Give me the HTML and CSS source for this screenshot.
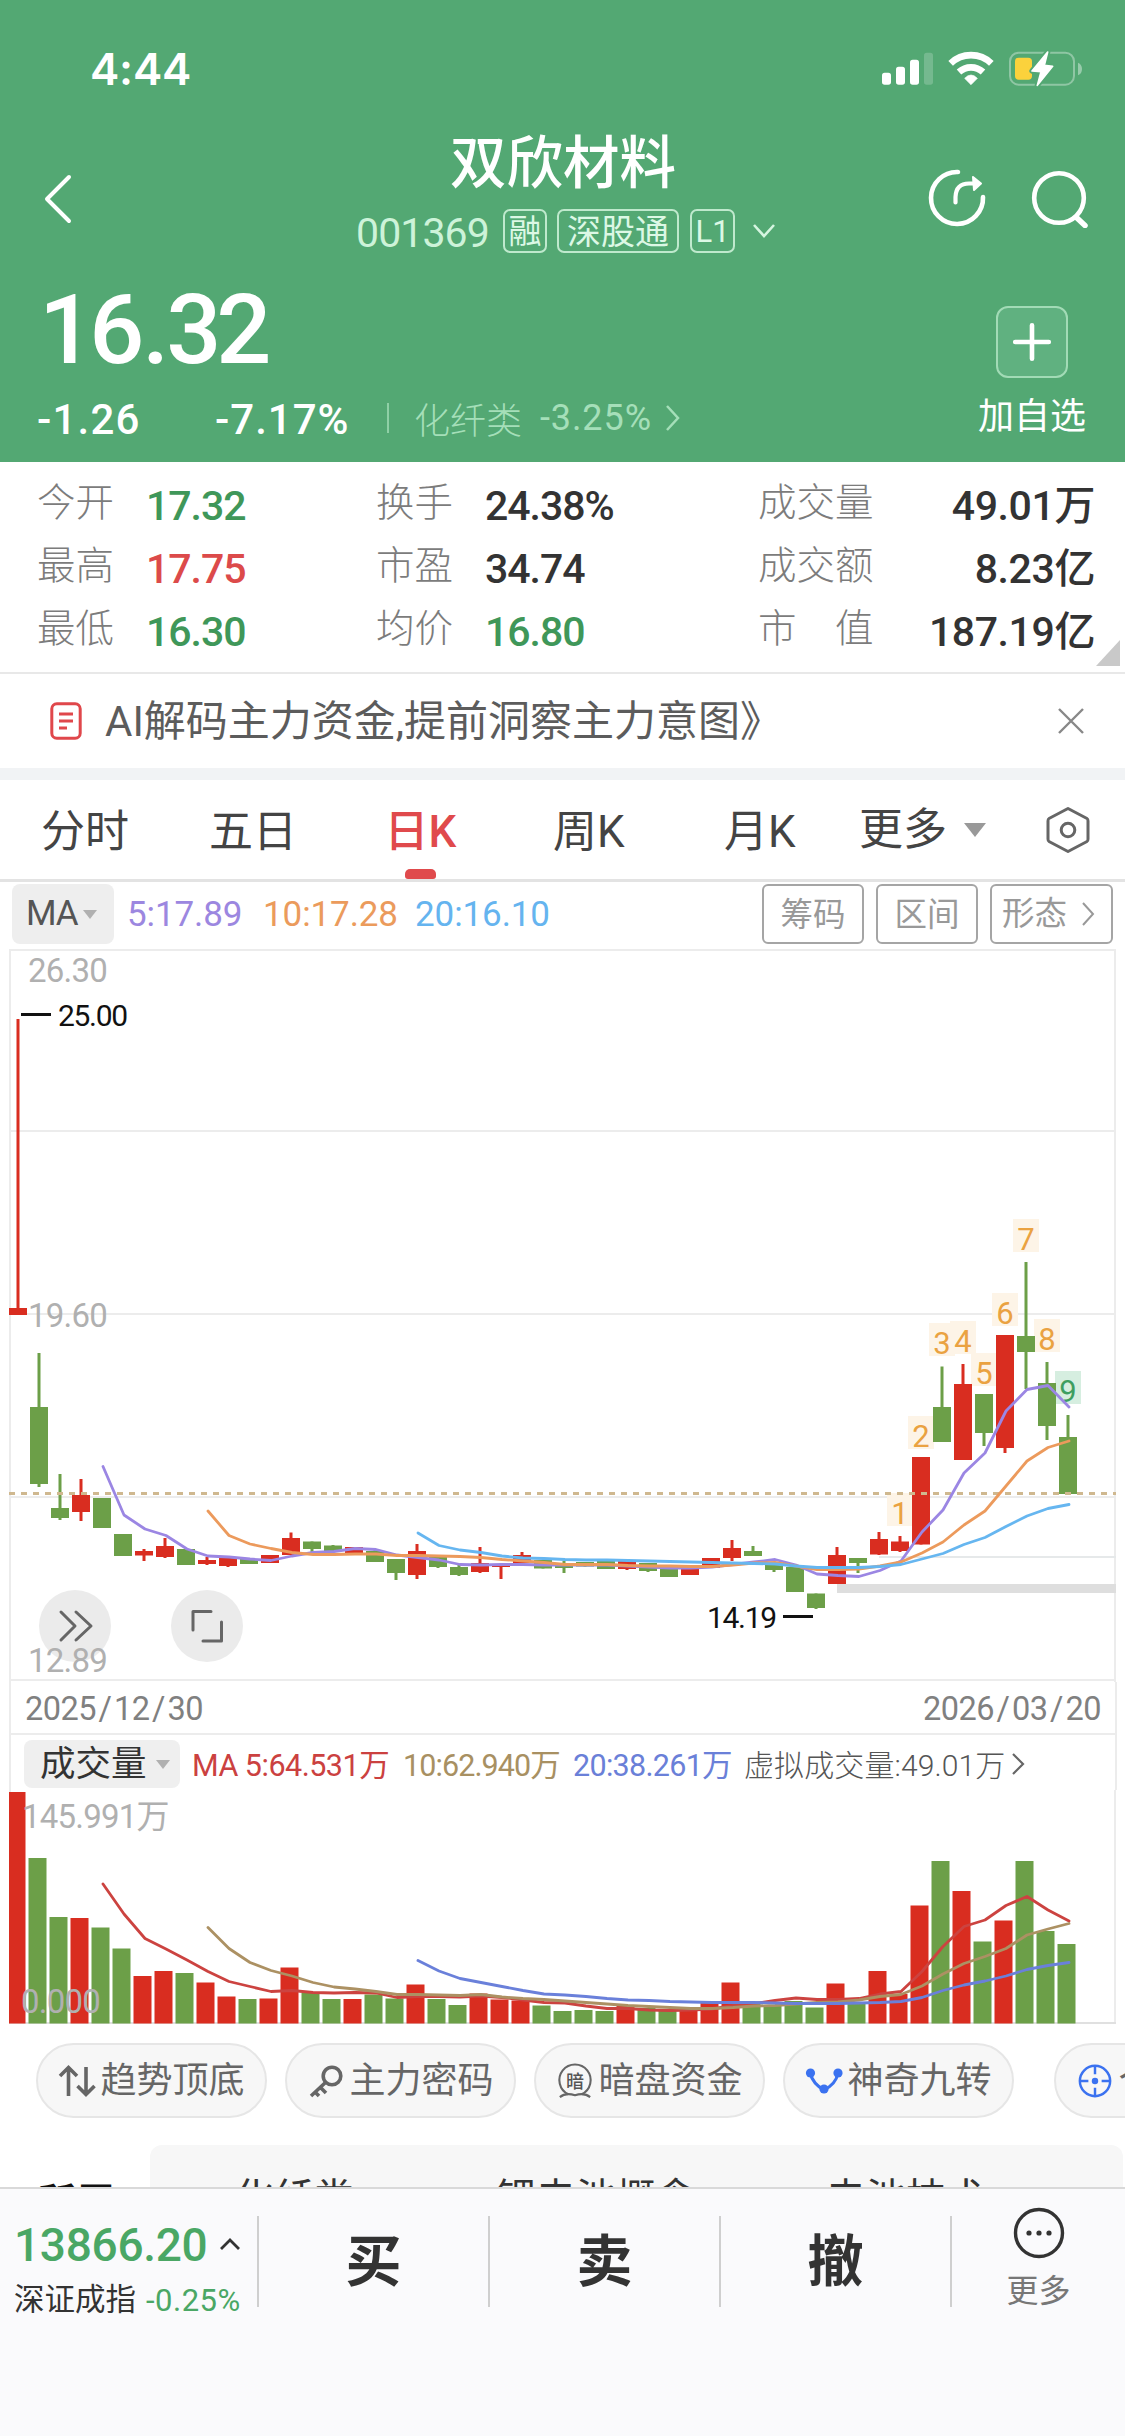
FILE: index.html
```html
<!DOCTYPE html>
<html lang="zh-CN">
<head>
<meta charset="utf-8">
<title>双欣材料 001369</title>
<link rel="stylesheet" href="styles.css">
</head>
<body>
<div class="app">
  <header class="hero">
    <div class="status">
      <span class="clock">4:44</span>
      <svg class="status-icons" viewBox="60 55 615 125">
        <g fill="#fff">
          <rect x="66" y="129" width="27" height="36" rx="8"/><rect x="108" y="111" width="27" height="54" rx="8"/><rect x="150" y="90" width="27" height="75" rx="8"/><rect x="192" y="69" width="27" height="96" rx="8" opacity=".2"/>
          <path d="M333 165l-19-19q19-20 38 0z" stroke="#fff" stroke-width="2" stroke-linejoin="round"/>
        </g>
        <g fill="none" stroke="#fff" stroke-width="20"><path d="M272 101A88 88 0 0 1 394 101"/><path d="M297 127A53 53 0 0 1 369 127"/></g>
        <rect x="450" y="69" width="192" height="96" rx="26" fill="none" stroke="#fff" stroke-opacity=".35" stroke-width="6"/>
        <path d="M654 99q12 5 12 19t-12 19z" fill="#fff" opacity=".4"/>
        <rect x="465" y="84" width="51" height="66" rx="11" fill="#fbd23c"/>
        <path d="M563 67L516 124L543 126L532 167L578 110L553 107Z" fill="#fff" stroke="#53a873" stroke-width="16" stroke-linejoin="round"/>
        <path d="M563 67L516 124L543 126L532 167L578 110L553 107Z" fill="#fff" stroke="#fff" stroke-width="5" stroke-linejoin="round"/>
      </svg>
    </div>
    <div class="nav">
      <svg class="back" viewBox="0 0 30 50"><path d="M26 3L4 25L26 47" fill="none" stroke="#fff" stroke-width="4" stroke-linecap="round" stroke-linejoin="round"/></svg>
      <div class="heading">
        <h1>双欣材料</h1>
        <div class="meta">
          <span class="code">001369</span><span class="tag tag-one">融</span><span class="tag tag-wide">深股通</span><span class="tag tag-l1">L1</span>
          <svg class="down" viewBox="0 0 24 16"><path d="M2 2L12 13L22 2" fill="none" stroke="#d5f5e0" stroke-width="2.6"/></svg>
        </div>
      </div>
      <div class="nav-actions">
        <svg class="nav-icon" viewBox="0 0 60 60"><g fill="none" stroke="#fff" stroke-width="4.6" stroke-linecap="round"><path d="M31 4A26 26 0 1 0 56 29"/><path d="M28.500 34.500V29Q29 15.500 42 15.500H50" stroke-width="4.200"/></g><path d="M46 9L54 15.500L47 22Z" fill="#fff" stroke="#fff" stroke-width="2" stroke-linejoin="round"/></svg>
        <svg class="nav-icon" viewBox="0 0 60 60"><g fill="none" stroke="#fff" stroke-width="4.600" stroke-linecap="round"><circle cx="29" cy="30" r="24.800"/><path d="M47 50L55 57.500" stroke-width="5.500"/></g></svg>
      </div>
    </div>
    <div class="quote">
      <div class="quote-main">
        <div class="price">16<i>.</i>32</div>
        <div class="changes">
          <span class="chg chg-abs">-1.26</span><span class="chg chg-pct">-7.17%</span><i class="bar"></i>
          <span class="sector">化纤类</span><span class="sector-pct">-3.25%</span>
          <svg class="right" viewBox="0 0 16 28"><path d="M2 2L13 14L2 26" fill="none" stroke="#a5dfb9" stroke-width="2.500"/></svg>
        </div>
      </div>
      <div class="add">
        <div class="add-btn"><svg viewBox="0 0 40 40"><path d="M20 4V36M4 20H36" stroke="#fff" stroke-width="4.400" stroke-linecap="round"/></svg></div>
        <span>加自选</span>
      </div>
    </div>
  </header>

  <section class="stats">
    <span class="k">今开</span><b class="down-c">17.32</b><span class="k">换手</span><b>24.38%</b><span class="k">成交量</span><b class="end">49.01万</b>
    <span class="k">最高</span><b class="up-c">17.75</b><span class="k">市盈</span><b>34.74</b><span class="k">成交额</span><b class="end">8.23亿</b>
    <span class="k">最低</span><b class="down-c">16.30</b><span class="k">均价</span><b class="down-c">16.80</b><span class="k">市　值</span><b class="end">187.19亿</b>
    <i class="corner"></i>
  </section>

  <section class="notice">
    <svg class="doc" viewBox="0 0 32 38"><rect x="1.800" y="1.800" width="28.400" height="34.400" rx="5" fill="none" stroke="#e0474b" stroke-width="3"/><path d="M9 12H23M9 19H23M9 26H17" stroke="#e0474b" stroke-width="3"/></svg>
    <span class="notice-text">AI解码主力资金,提前洞察主力意图》</span>
    <svg class="close" viewBox="0 0 28 28"><path d="M2 2L26 26M26 2L2 26" stroke="#888" stroke-width="2.400"/></svg>
  </section>

  <nav class="tabs">
    <span>分时</span><span>五日</span><span class="on">日K</span><span>周K</span><span>月K</span><span class="more-tab">更多<i class="tri big"></i></span>
    <svg class="hex" viewBox="0 0 46 48"><path d="M23 2.500L42 12.500Q43 13 43 15V33Q43 35 42 35.500L23 45.500L4 35.500Q3 35 3 33V15Q3 13 4 12.500Z" fill="none" stroke="#666" stroke-width="3" stroke-linejoin="round"/><circle cx="23" cy="24" r="6.800" fill="none" stroke="#666" stroke-width="3"/></svg>
  </nav>

  <div class="ma-row">
    <span class="ma-chip">MA<i class="tri"></i></span>
    <span class="ma ma5">5:17.89</span><span class="ma ma10">10:17.28</span><span class="ma ma20">20:16.10</span>
    <span class="box">筹码</span><span class="box">区间</span><span class="box wide">形态<svg viewBox="0 0 14 26"><path d="M2 2L12 13L2 24" fill="none" stroke="#999" stroke-width="2"/></svg></span>
  </div>

  <svg class="kline" id="kline" viewBox="0 948 1125 734"></svg>
  <div class="dates"><span>2025<i>/</i>12<i>/</i>30</span><span>2026<i>/</i>03<i>/</i>20</span></div>
  <div class="vol-head">
    <span class="vol-chip">成交量<i class="tri"></i></span>
    <span class="v v5">MA 5:64.531万</span><span class="v v10">10:62.940万</span><span class="v v20">20:38.261万</span><span class="v virt">虚拟成交量:49.01万</span>
    <svg viewBox="0 0 14 24"><path d="M2 2L12 12L2 22" fill="none" stroke="#666" stroke-width="2.200"/></svg>
  </div>
  <svg class="volume" id="volume" viewBox="0 1790 1125 235"></svg>

  <div class="pills">
    <span class="pill"><svg viewBox="0 0 38 34"><path d="M10.500 32V4M2 12L10.500 3.500L19 12M28 3V30M19.500 22L28 30.500L36.500 22" fill="none" stroke="#666" stroke-width="3.600"/></svg>趋势顶底</span>
    <span class="pill"><svg viewBox="0 0 38 34"><g fill="none" stroke="#666" stroke-width="3.600"><circle cx="25" cy="12" r="8.800"/><path d="M19 18L4 32M13 23L19 29M8 28L12 32"/></g></svg>主力密码</span>
    <span class="pill"><svg viewBox="0 0 38 38"><path d="M12 33A16.500 16.500 0 1 1 26 33" fill="none" stroke="#666" stroke-width="2.200"/><path d="M3 36Q9 31 19 34Q29 31 35 36" fill="none" stroke="#666" stroke-width="2.200"/><text x="19" y="26" text-anchor="middle" font-size="19" font-weight="500" fill="#555">暗</text></svg>暗盘资金</span>
    <span class="pill"><svg viewBox="0 0 38 34"><path d="M5 9Q8 20 19 26Q31 20 33 9" fill="none" stroke="#3b72f0" stroke-width="3"/><g fill="#3b72f0"><circle cx="5.500" cy="9" r="4.600"/><circle cx="33" cy="9" r="4.600"/><circle cx="19" cy="25" r="4.600"/></g></svg>神奇九转</span>
    <i class="pill-sep"></i>
    <span class="pill"><svg viewBox="0 0 38 38"><g fill="none" stroke="#3b72f0" stroke-width="2.600"><circle cx="19" cy="19" r="16"/><path d="M19 3V12M19 26V35M3 19H12M26 19H35"/></g><circle cx="19" cy="19" r="3.400" fill="#3b72f0"/></svg>个股诊断</span>
  </div>

  <div class="belong">
    <strong>所属</strong>
    <div class="belong-list"><span>化纤类</span><span>锂电池概念</span><span>电池技术</span></div>
  </div>

  <footer class="bottom">
    <div class="index">
      <div class="index-top"><span>13866.20</span><svg viewBox="0 0 22 14"><path d="M2 12L11 3L20 12" fill="none" stroke="#333" stroke-width="2.800"/></svg></div>
      <div class="index-sub"><span>深证成指</span><em>-0.25%</em></div>
    </div>
    <b>买</b><b>卖</b><b>撤</b>
    <div class="more"><svg viewBox="0 0 52 52"><circle cx="26" cy="26" r="23.500" fill="none" stroke="#333" stroke-width="3.400"/><g fill="#333"><circle cx="16" cy="26" r="2.600"/><circle cx="26" cy="26" r="2.600"/><circle cx="36" cy="26" r="2.600"/></g></svg><span>更多</span></div>
  </footer>
</div>
<script src="chart.js"></script>
</body>
</html>
```
FILE: styles.css
```css
* { box-sizing: border-box; }
body { margin: 0; font-family: Roboto, "Noto Sans CJK SC", sans-serif; color: #333; background: #fff; }
svg { display: block; flex: none; }
i, em { font-style: normal; }
.app { width: 1125px; height: 2436px; display: flex; flex-direction: column; overflow: hidden; }
.app > * { flex: none; }

.hero { height: 462px; background: #53a873; color: #fff; }
.status { height: 132px; padding: 48px 40px 0 90px; display: flex; justify-content: space-between; }
.clock { font: 600 44px/42px Inter, sans-serif; letter-spacing: -.2px; }
.status-icons { width: 205px; height: 41.700px; }
.nav { height: 130px; display: flex; }
.back { width: 30px; height: 50px; margin: 42px 0 0 43px; }
.heading { width: 525px; margin-left: 192px; display: flex; flex-direction: column; align-items: flex-start; }
h1 { margin: 0 0 0 185px; font-size: 56.500px; line-height: 64px; font-weight: 500; white-space: nowrap; }
.meta { height: 44px; margin: 13px 0 0 91px; display: flex; align-items: center; }
.code { width: 147px; font-size: 41px; line-height: 44px; color: #cdf3d9; letter-spacing: -.9px; padding-top: 4px; }
.tag { height: 44px; border: 2px solid #bfe9cd; border-radius: 7px; font-size: 34px; line-height: 42px; text-align: center; color: #dcf8e5; }
.tag-one { width: 44px; font-size: 33px; }
.tag-wide { width: 122px; margin-left: 10px; }
.tag-l1 { width: 45px; margin-left: 11px; font-size: 31px; }
.down { width: 24px; height: 16px; margin-left: 17px; }
.nav-actions { display: flex; gap: 43px; padding: 36px 35px 0 0; margin-left: auto; }
.nav-icon { width: 60px; height: 60px; }
.quote { display: flex; justify-content: space-between; height: 200px; }
.price { height: 120px; margin-left: 39px; padding-top: 8px; font-size: 97px; line-height: 120px; font-weight: 500; letter-spacing: -5px; }
.price i { padding: 0 2px 0 3px; }
.changes { height: 60px; margin-top: 5px; padding: 1px 0 0 37px; display: flex; align-items: center; }
.chg { font-size: 42px; font-weight: 500; line-height: 56px; padding-top: 4px; }
.chg-abs { width: 178px; letter-spacing: 1.200px; }
.chg-pct { width: 172px; letter-spacing: 1px; }
.bar { width: 2px; height: 30px; background: #8fd0a6; margin-right: 25px; }
.sector { font-size: 36px; width: 126px; color: #a5dfb9; font-weight: 300; }
.sector-pct { font-size: 36px; width: 125px; color: #a5dfb9; letter-spacing: .9px; padding-top: 1px; }
.right { width: 16px; height: 28px; }
.add { width: 120px; margin: 44px 33px 0 0; display: flex; flex-direction: column; align-items: center; font-size: 36px; }
.add-btn { width: 72px; height: 72px; border: 2px solid #a2dbb6; border-radius: 12px; background: #60b180; display: flex; align-items: center; justify-content: center; }
.add-btn svg { width: 42px; height: 42px; }
.add span { line-height: 44px; margin-top: 17px; }

.stats { position: relative; height: 210px; padding: 9px 30px 0 37px; display: grid; grid-template-columns: 109px 230px 109px 273px 120px 1fr; grid-template-rows: repeat(3, 63px); align-items: center; font-size: 38.500px; line-height: 58px; }
.stats .k { color: #7c7c7c; font-weight: 300; }
.stats b { font-size: 41px; font-weight: 500; padding-top: 6px; letter-spacing: -1px; }
.stats .end { text-align: right; letter-spacing: -.4px; }
.stats .down-c { color: #3f9759; }
.stats .up-c { color: #dc4a4a; }
.corner { position: absolute; right: 5px; bottom: 6px; border-left: 24px solid transparent; border-bottom: 26px solid #c9c9c9; }

.notice { height: 108px; border-top: 2px solid #e8e8e8; border-bottom: 12px solid #f1f3f5; padding: 0 40px 0 50px; display: flex; align-items: center; font-size: 42px; color: #5c5c5c; }
.doc { width: 32px; height: 38px; margin-right: 23px; }
.notice-text { line-height: 60px; flex: 1; white-space: nowrap; padding-top: 2px; }
.close { width: 28px; height: 28px; }

.tabs { height: 102px; border-bottom: 3px solid #e3e3e3; padding-left: 41px; display: grid; grid-template-columns: 168px 176px 168px 171px 135px 186px 46px; align-items: center; font-size: 44px; line-height: 60px; color: #444; }
.tabs span { height: 99px; line-height: 104px; white-space: nowrap; }
.tabs .on { color: #e04a4c; font-weight: 500; display: flex; flex-direction: column; width: 71px; align-items: center; line-height: 104px; }
.tabs .on::after { content: ""; width: 31px; height: 10px; border-radius: 5px 5px 3px 3px; background: #e04a4c; margin-top: -15px; }
.more-tab { display: flex; align-items: center; gap: 17px; }
.hex { width: 46px; height: 48px; }
.tri { display: inline-block; border: 7px solid transparent; border-top: 9px solid #b0b0b0; border-bottom: 0; }
.tri.big { border-width: 14px 11px 0; border-top-color: #999; }

.ma-row { height: 66px; padding: 2px 12px 0; display: flex; align-items: flex-start; font-size: 35px; line-height: 60px; }
.ma-chip { width: 102px; height: 60px; background: #eee; border-radius: 8px; display: flex; align-items: center; padding-left: 14px; color: #555; letter-spacing: -1px; gap: 5px; margin-right: 13px; }
.ma-row .ma { padding-top: 1px; letter-spacing: -.1px; }
.ma5 { width: 136px; color: #9c87e0; }
.ma10 { width: 152px; color: #eb9b5c; }
.ma20 { width: 347px; color: #65b4ef; }
.box { width: 102px; height: 60px; border: 2px solid #a5a5a5; border-radius: 6px; font-size: 32.500px; line-height: 58px; color: #999; text-align: center; margin-right: 12px; white-space: nowrap; flex: none; }
.box.wide { width: 123px; margin: 0; display: flex; align-items: center; padding-left: 10px; gap: 14px; }
.box svg { width: 14px; height: 26px; }

.kline { width: 1125px; height: 734px; }
.dates { height: 53px; margin: 0 8px 0 9px; border: 2px solid #ececec; border-width: 0 2px 2px; padding: 1px 14px 0; display: flex; justify-content: space-between; font-size: 32.500px; line-height: 52px; color: #808080; letter-spacing: -.5px; }
.dates i { padding: 0 2.500px; }
.vol-head { height: 55px; margin: 0 8px 0 9px; border: solid #ececec; border-width: 0 2px; padding: 5px 0 0 13px; display: flex; align-items: flex-start; font-size: 30.500px; line-height: 52px; white-space: nowrap; }
.vol-chip { width: 156px; height: 48px; background: #efefef; border-radius: 8px; padding-left: 16px; font-size: 35.500px; line-height: 46px; display: flex; align-items: center; gap: 9px; margin-right: 12px; }
.v { padding-top: 0; letter-spacing: -.5px; }
.v5 { width: 211px; color: #cb4140; }
.v10 { width: 170px; color: #a89062; letter-spacing: -.9px; }
.v20 { width: 171px; color: #6a80d8; letter-spacing: -.7px; }
.virt { width: 267px; color: #555; font-size: 30px; font-weight: 300; letter-spacing: .1px; }
.vol-head svg { width: 14px; height: 24px; margin-top: 12px; }
.volume { width: 1125px; height: 235px; }
.axis { font-size: 33px; fill: #b0b0b0; letter-spacing: -.8px; }
.mark { font-size: 30px; fill: #111; letter-spacing: -1.300px; }
.nine { font-size: 31px; fill: #eaa241; text-anchor: middle; font-weight: 400; }

.pills { height: 120px; padding: 18px 0 0 36px; display: flex; gap: 18px; overflow: hidden; }
.pill { flex: none; width: 231px; height: 75px; border: 2px solid #e6e6e6; border-radius: 38px; background: #f7f7f7; display: flex; align-items: center; justify-content: center; gap: 4px; font-size: 36px; line-height: 60px; color: #666; white-space: nowrap; }
.pill svg { width: 38px; height: 36px; }
.pill-sep { width: 2px; height: 48px; background: #e2e2e2; margin: 13px 3px 0 1px; }

.belong { height: 42px; display: flex; overflow: hidden; color: #333; }
.belong strong { width: 150px; padding-left: 37px; font-size: 39px; line-height: 40px; padding-top: 38px; color: #111; }
.belong-list { width: 973px; height: 120px; background: #f7f7f7; border-radius: 12px; display: flex; padding: 32px 0 0 84px; font-size: 40px; line-height: 44px; white-space: nowrap; }
.belong-list span:nth-child(1) { width: 262px; }
.belong-list span:nth-child(2) { width: 330px; }

.bottom { height: 249px; background: #fafafc; border-top: 2px solid #d9d9d9; display: flex; padding-top: 27px; }
.index { width: 257px; padding-left: 14px; }
.index-top { display: flex; align-items: center; height: 58px; font-size: 46px; line-height: 58px; color: #4aa765; gap: 12px; font-weight: 500; letter-spacing: -.3px; }
.index-top svg { width: 22px; height: 14px; margin-bottom: 3px; }
.index-sub { display: flex; height: 44px; line-height: 44px; margin-top: 4px; font-size: 30.500px; }
.index-sub span { width: 132px; }
.index-sub em { color: #4aa765; font-size: 31px; padding-top: 1px; letter-spacing: .5px; }
.bottom > b { width: 231px; height: 91px; border-left: 2px solid #cfcfcf; text-align: center; font-size: 56px; line-height: 93px; font-weight: 700; }
.more { width: 175px; height: 91px; border-left: 2px solid #cfcfcf; display: flex; flex-direction: column; align-items: center; font-size: 32px; color: #777; }
.more svg { width: 52px; height: 52px; margin-top: -9px; flex: none; }
.more span { line-height: 44px; margin-top: 10px; }
```
FILE: chart.js
```js
const UP = '#d92d20', DOWN = '#6c9f48', GRID = '#ececec';
const cx = i => 18 + 21 * i;

// direction, wick top, body top, body bottom, wick bottom
const candles = [
  ['u',1019,1308,1315,1315],['d',1353,1407,1484,1487],['d',1474,1508,1518,1520],['u',1479,1495,1512,1521],
  ['d',1498,1498,1528,1528],['d',1534,1534,1556,1556],['u',1549,1551,1555.500,1561],['u',1538,1546,1557,1558],
  ['d',1549,1549,1565,1565],['u',1557,1560,1564,1565],['u',1557,1557,1566,1567],['d',1559,1559,1564,1564],
  ['u',1555,1555,1563,1563],['u',1532.500,1538,1555,1555],['d',1541.500,1541.500,1549,1552],['d',1545,1545.500,1551,1551],
  ['u',1547,1547,1554,1554],['d',1550,1551,1562,1562],['d',1559,1559,1573,1580],['u',1544,1551,1575,1579],
  ['d',1556,1556,1567,1568],['d',1565,1567,1575,1576],['u',1547,1563,1572,1573],['u',1564,1565,1567,1579],
  ['u',1552,1555,1563,1563],['d',1560,1560,1568.500,1568.500],['d',1561,1565,1568,1573],['d',1562,1562,1566.500,1566.500],
  ['d',1561,1561,1569,1569],['u',1561,1561,1569,1570],['d',1563,1563,1571,1572],['d',1567,1567,1577,1577],
  ['u',1568,1568,1575,1575],['u',1558,1558,1568,1568],['u',1540,1548,1558,1561],['d',1546,1551,1556,1556],
  ['d',1565,1565,1570,1572],['d',1567,1567,1592,1592],['d',1593.500,1593.500,1608,1609],['u',1547,1555,1584,1584],
  ['d',1558,1558,1563,1573],['u',1532,1539,1554.500,1555],['u',1536,1541.500,1551,1552],['u',1457,1457,1544.500,1544.500],
  ['d',1366.500,1407,1442,1442],['u',1364,1384,1460,1460],['d',1394,1394,1433,1446],['u',1335,1335,1448,1453],
  ['d',1262,1336,1352,1389],['d',1362,1383,1426,1440],['d',1415,1437,1494,1494]
];
const ma5 = [1466.500,1515,1529,1535.500,1549,1556,1557,1559,1560.500,1556,1552.500,1551.500,1548.500,1549.500,1555,1557.500,1560,1564.500,1565,1564.500,1564.500,1565,1565,1565,1565,1566,1567,1568,1568,1567,1564.500,1562,1559.500,1565,1574,1575.500,1576.500,1570.500,1561,1532,1510,1473,1453,1411,1389.500,1385.500,1407];
const ma10 = [1511,1535.500,1544,1548.500,1552.500,1554.500,1554.500,1554,1554,1555.500,1555.500,1556,1556.500,1557.500,1559.500,1561,1562.500,1564.500,1564.500,1564.500,1565.500,1566,1566,1566.500,1566.500,1565,1563,1562.500,1566,1569.500,1569.500,1569,1566,1562,1553,1542,1525,1511,1486,1461,1447.500,1441];
const ma20 = [1533,1545.500,1550,1552.500,1556,1558,1558.500,1559.500,1560,1560,1560.500,1561,1561.500,1562,1562.500,1563,1563.500,1564,1566,1567.500,1567.500,1567.500,1566.500,1564.500,1559,1553.500,1544.500,1537.500,1526.500,1516,1508.500,1504.500];
const nine = [1493,1416,1323,1321,1353,1293,1219,1319,1371];

const volTop = [1792,1858,1917,1918,1927.500,1948.500,1976,1971,1973,1982.500,1996.500,1999,1998.500,1967.500,1993,1999,1999,1994.500,1998.500,1984.500,1999,2005,1993.500,1999.500,2000.500,2005.500,2011,2010,2011,2005.500,2008,2010,2009,2002.500,1982.500,2004,2005,2001,2007.500,1983.500,2002,1971,1994,1905.500,1861,1891,1941.500,1920.500,1861,1931,1944];
const vol5 = [1884,1914,1938.500,1949,1960,1971.500,1981.500,1986.500,1991.500,1990.500,1992.500,1993,1992.500,1993,1997.500,1996.500,1996.500,1997,1996,1997.500,2000,2002.500,2003,2006,2008.500,2008.500,2010,2010.500,2010,2009,2005.500,2003.500,2000.500,1998,1999.500,1999.500,1998.500,1994,1991.500,1971.500,1946.500,1926.500,1920,1905.500,1896.500,1910,1921];
const vol10 = [1927.500,1948.500,1962.500,1970.500,1976,1982.500,1987,1989,1991.500,1994.500,1994.500,1995,1995.500,1994.500,1997,1998.500,1999.500,2001,2002.500,2004,2005.500,2006.500,2007.500,2008.500,2008.500,2007.500,2006,2005.500,2004,2002.500,2002,2000,1996.500,1994.500,1986,1974,1963.500,1956.500,1948.500,1935,1929,1923.500];
const vol20 = [1960.500,1971,1978.500,1982.500,1986.500,1990.500,1994,1995,1996.500,1998.500,2000,2000.500,2001.500,2002,2002.500,2002.500,2002.500,2003,2003.500,2003.500,2003.500,2003,2002.500,2001.500,1997.500,1990.500,1985,1981,1976,1969.500,1965.500,1962.500];

const rect = (x, y, w, h, fill) => `<rect x="${x}" y="${y}" width="${w}" height="${h}" fill="${fill}"/>`;
const line = (ys, start, color) =>
  `<polyline fill="none" stroke="${color}" stroke-width="2.8" stroke-linejoin="round" stroke-linecap="round" points="${ys.map((y, i) => (cx(start + i) + 1) + ',' + y).join(' ')}"/>`;
const text = (x, y, cls, s) => `<text x="${x}" y="${y}" class="${cls}">${s}</text>`;

let k = '';
[949, 1130, 1313, 1496, 1679].forEach(y => { k += rect(9, y, 1107, 2, GRID); });
k += rect(9, 949, 2, 733, GRID) + rect(1114, 949, 2, 733, GRID);
k += rect(879, 1556, 237, 2, '#e6e9ea') + rect(837, 1584, 279, 9, '#dedede');
k += '<circle cx="75" cy="1626" r="36" fill="#ebebeb"/><circle cx="207" cy="1626" r="36" fill="#ebebeb"/>';
k += '<g fill="none" stroke="#666" stroke-width="3" stroke-linecap="round" stroke-linejoin="round"><path d="M61 1612L75 1626L61 1640M76 1612L91 1626L76 1640"/><path d="M193 1630V1611.500H211M221.500 1622V1641H203"/></g>';
nine.forEach((y, i) => {
  k += rect(cx(42 + i) - 13, y, 26, 33, i === 8 ? '#d6eee0' : '#fdf4e7');
});
candles.forEach(([d, wt, bt, bb, wb], i) => {
  const c = d === 'u' ? UP : DOWN;
  k += rect(cx(i) - 1.5, wt, 3, wb - wt, c) + rect(cx(i) - 9, bt, 18, bb - bt, c);
});
k += '<path d="M9 1493.5H1116" stroke="#cfb88f" stroke-width="3" stroke-dasharray="6 6"/>';
nine.forEach((y, i) => {
  k += `<text x="${cx(42 + i)}" y="${y + 31}" class="nine"${i === 8 ? ' style="fill:#3e9e60"' : ''}>${i + 1}</text>`;
});
k += line(ma5, 4, '#9b86e3') + line(ma10, 9, '#ec9a5c') + line(ma20, 19, '#66b6f0');
k += text(28, 982, 'axis', '26.30') + text(28, 1327, 'axis', '19.60') + text(28, 1672, 'axis', '12.89');
k += rect(21, 1013, 30, 3, '#111') + text(58, 1026, 'mark', '25.00');
k += rect(783, 1615, 30, 3, '#111') + text(707, 1628, 'mark', '14.19');
document.getElementById('kline').innerHTML = k;

let v = rect(9, 1790, 2, 233, GRID) + rect(1114, 1790, 2, 233, GRID) + rect(9, 2022, 1107, 2, '#e0e0e0');
volTop.forEach((y, i) => {
  const x = Math.max(9, 7.500 + 21 * i);
  v += rect(x, y, 25.500 + 21 * i - x, 2023.500 - y, candles[i][0] === 'u' ? UP : DOWN);
});
v += line(vol5, 4, '#cc4340') + line(vol10, 9, '#ac9163') + line(vol20, 19, '#6a80da');
v += text(22, 1828, 'axis', '145.991万') + text(21, 2013, 'axis', '0.000');
document.getElementById('volume').innerHTML = v;
```
